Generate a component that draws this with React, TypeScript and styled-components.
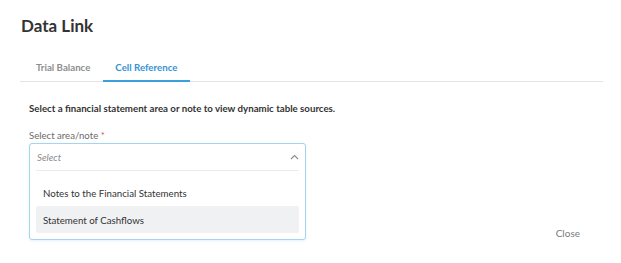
import React, { useState } from 'react';
import styled, { createGlobalStyle } from 'styled-components';

const GlobalStyle = createGlobalStyle`
  html, body {
    margin: 0;
    padding: 0;
    background: #ffffff;
    font-family: Lato, 'Open Sans', sans-serif;
  }
`;

const Dialog = styled.div`
  width: 621px;
  height: 263px;
  box-sizing: border-box;
  padding: 14px 18px 0 21px;
  display: flex;
  flex-direction: column;
`;

const Title = styled.h1`
  margin: 0;
  font-size: 17px;
  line-height: 24px;
  font-weight: 700;
  color: #333333;
`;

const TabList = styled.div`
  display: flex;
  margin: 18px 0 0 -1px;
  padding-left: 3.5px;
  border-bottom: 1px solid #e4e4e4;
`;

interface TabProps {
  $active: boolean;
}

const Tab = styled.button<TabProps>`
  background: none;
  border: none;
  margin: 0 0 -1px;
  padding: 4px 12.5px 6px;
  font-family: inherit;
  font-size: 9.7px;
  line-height: 14px;
  font-weight: 700;
  cursor: pointer;
  color: ${p => (p.$active ? '#3593d3' : '#8e8e8e')};
  border-bottom: 2px solid ${p => (p.$active ? '#3aa0dc' : 'transparent')};
`;

const Body = styled.div`
  padding: 0 0 0 8px;
`;

const Intro = styled.p`
  margin: 19px 0 0;
  font-size: 9.7px;
  line-height: 14px;
  font-weight: 700;
  color: #333333;
`;

const Label = styled.label`
  display: block;
  margin-top: 14px;
  font-size: 9.6px;
  line-height: 14px;
  color: #6b6b6b;
`;

const Required = styled.span`
  color: #d9534f;
`;

const Field = styled.div`
  position: relative;
  width: 277px;
  height: 28px;
`;

const Dropdown = styled.div`
  position: absolute;
  top: 0;
  left: 0;
  right: 0;
  z-index: 2;
  background: #ffffff;
  border: 1px solid #a6d3ee;
  border-radius: 3px;
  box-shadow: 0 1px 3px rgba(90, 160, 210, 0.15);
  padding: 0 6px 6px;
`;

const Control = styled.div`
  display: flex;
  align-items: center;
  justify-content: space-between;
  height: 26px;
  padding: 0 0 0 1px;
  border-bottom: 1px solid #ececec;
`;

const Placeholder = styled.span`
  font-size: 9.7px;
  font-style: italic;
  color: #8a8a8a;
`;

const Chevron = styled.svg`
  width: 9px;
  height: 6px;
`;

const Options = styled.ul`
  list-style: none;
  margin: 0;
  padding: 8px 0 0;
`;

interface OptionProps {
  $highlighted: boolean;
}

const Option = styled.li<OptionProps>`
  height: 27px;
  display: flex;
  align-items: center;
  padding: 0 7px;
  border-radius: 2px;
  font-size: 9.7px;
  color: #333333;
  cursor: pointer;
  background: ${p => (p.$highlighted ? '#f0f1f3' : 'transparent')};
`;

const Footer = styled.div`
  display: flex;
  justify-content: flex-end;
  margin-top: 55px;
  padding-right: 23px;
`;

const CloseButton = styled.button`
  background: none;
  border: none;
  padding: 0;
  font-family: inherit;
  font-size: 10px;
  line-height: 14px;
  color: #7a7a7a;
  cursor: pointer;
`;

const options = ['Notes to the Financial Statements', 'Statement of Cashflows'];

const App: React.FC = () => {
  const [tab, setTab] = useState('cell');
  const [hovered, setHovered] = useState(1);

  return (
    <>
      <GlobalStyle />
      <Dialog>
        <Title>Data Link</Title>
        <TabList>
          <Tab $active={tab === 'trial'} onClick={() => setTab('trial')}>Trial Balance</Tab>
          <Tab $active={tab === 'cell'} onClick={() => setTab('cell')}>Cell Reference</Tab>
        </TabList>
        <Body>
          <Intro>Select a financial statement area or note to view dynamic table sources.</Intro>
          <Label>
            Select area/note <Required>*</Required>
          </Label>
          <Field>
            <Dropdown>
              <Control>
                <Placeholder>Select</Placeholder>
                <Chevron viewBox="0 0 9 6">
                  <path d="M1 5 L4.5 1.5 L8 5" fill="none" stroke="#8c8c8c" strokeWidth="1.1" />
                </Chevron>
              </Control>
              <Options>
                {options.map((o, i) => (
                  <Option key={o} $highlighted={hovered === i} onMouseEnter={() => setHovered(i)}>
                    {o}
                  </Option>
                ))}
              </Options>
            </Dropdown>
          </Field>
        </Body>
        <Footer>
          <CloseButton>Close</CloseButton>
        </Footer>
      </Dialog>
    </>
  );
};

export default App;
